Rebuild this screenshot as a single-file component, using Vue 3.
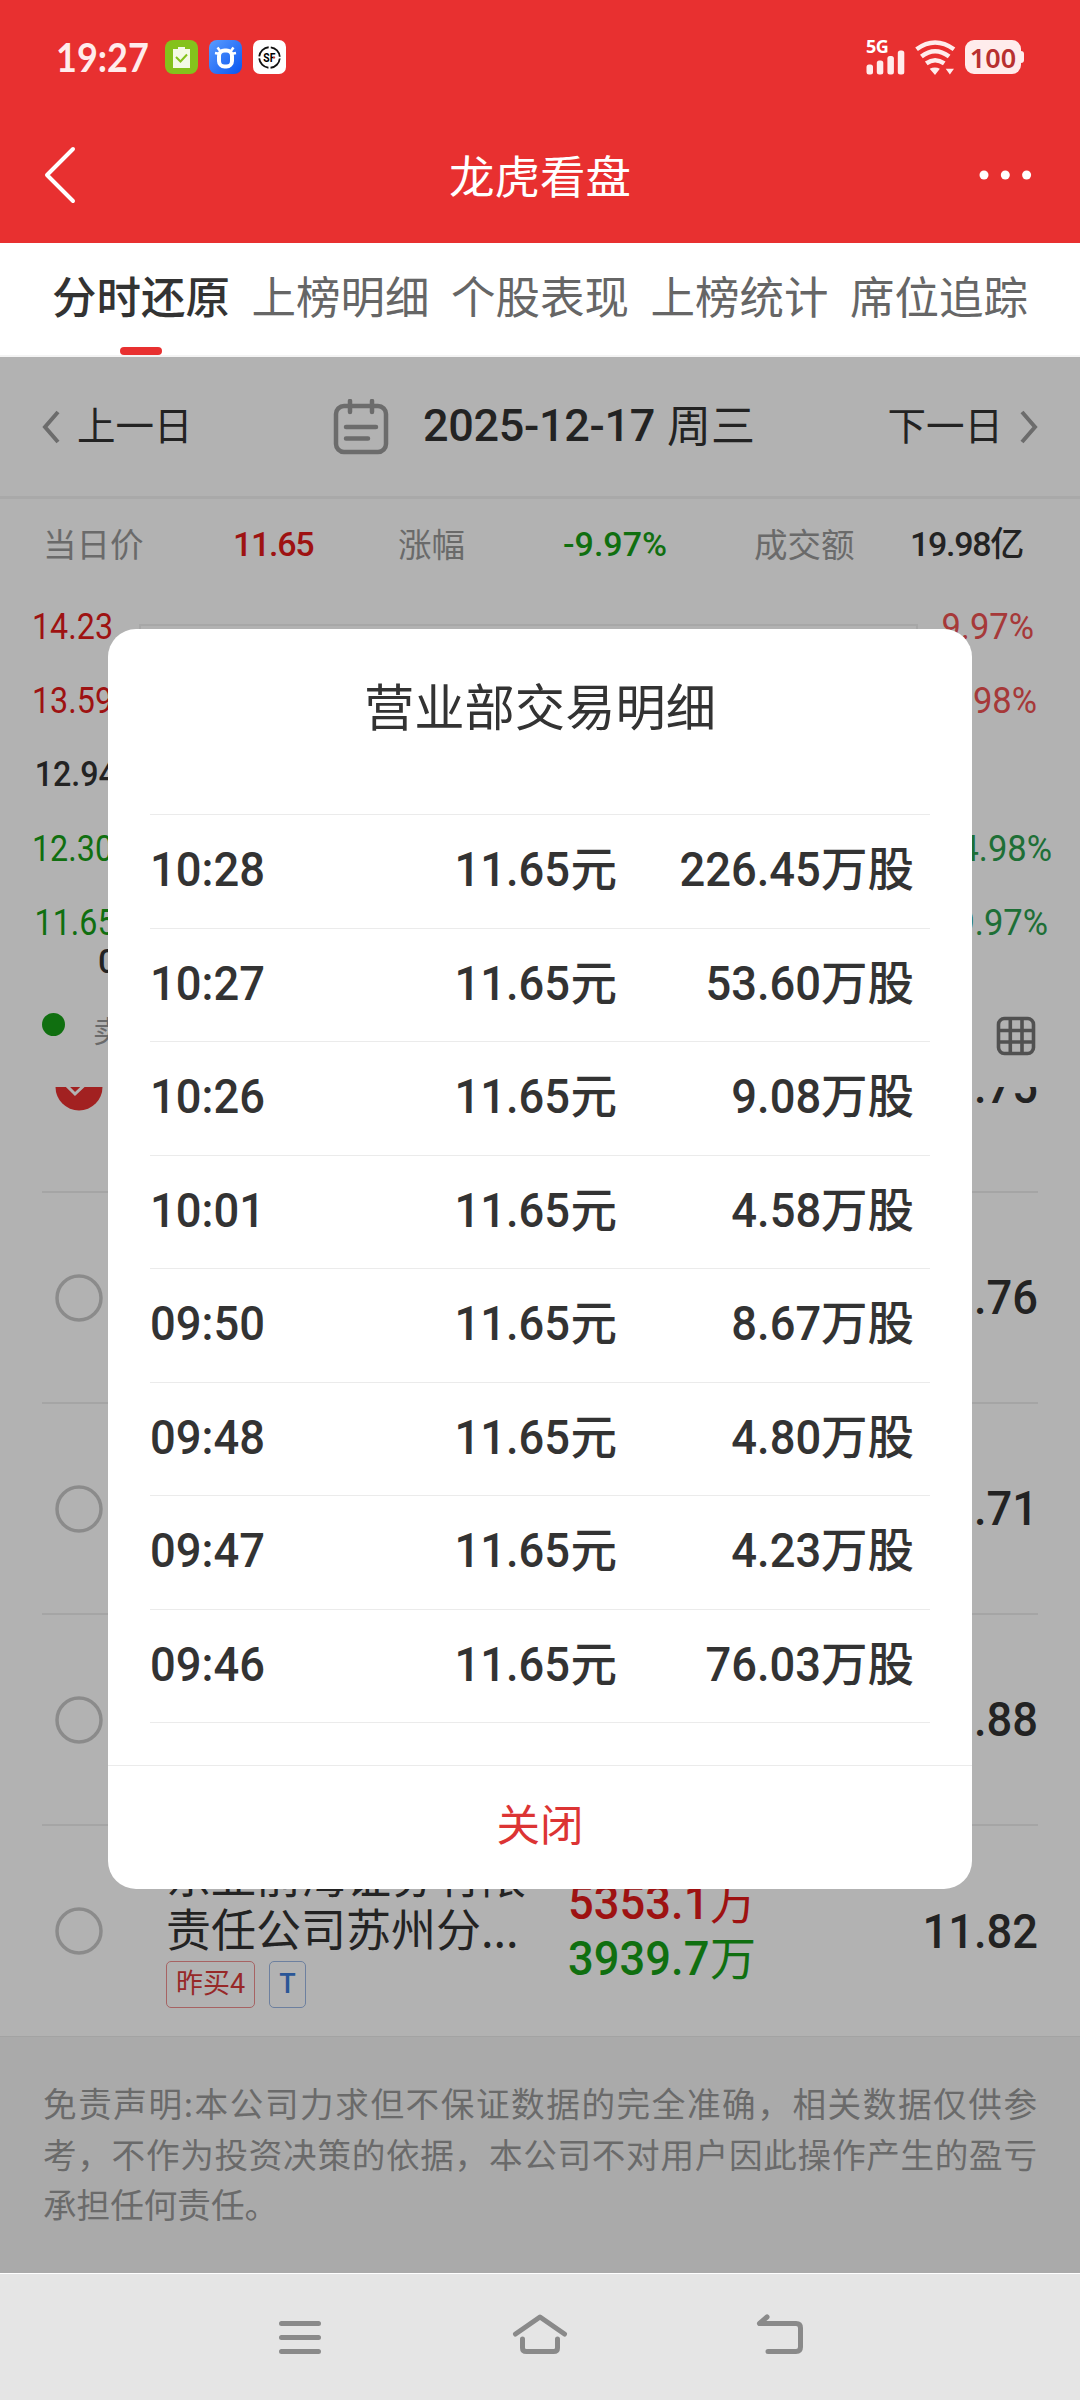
<template>
  <div class="phone">
    <header class="top">
      <div class="status-bar">
        <span class="clock">19:27</span>
        <svg class="app-icon" viewBox="0 0 33 34">
          <rect width="33" height="34" rx="8" fill="#84c21c" />
          <path d="M8 9h5V7h7v2h5v19H8z" fill="#f4fae6" />
          <path d="M11 17l4.500 4.500L22 14.500" fill="none" stroke="#84c21c" stroke-width="2" />
        </svg>
        <svg class="app-icon" viewBox="0 0 33 34">
          <defs>
            <linearGradient id="blue" x1="0" y1="0" x2="1" y2="1">
              <stop offset="0" stop-color="#5a9cff" />
              <stop offset="1" stop-color="#0a55f0" />
            </linearGradient>
          </defs>
          <rect width="33" height="34" rx="8" fill="url(#blue)" />
          <rect x="10" y="10.500" width="13" height="16" rx="5.500" fill="none" stroke="#fff" stroke-width="4" />
          <path d="M6 13l5 1M27 13l-5 1M8.500 7.500l3 4M24.500 7.500l-3 4" stroke="#fff" stroke-width="2.500" />
        </svg>
        <svg class="app-icon" viewBox="0 0 33 34">
          <rect width="33" height="34" rx="7" fill="#fff" />
          <circle cx="16.500" cy="17.500" r="10.300" fill="none" stroke="#111" stroke-width="1.800" stroke-dasharray="14 2.180" stroke-dashoffset="-1" />
          <text x="10.300" y="21.800" textLength="12" lengthAdjust="spacingAndGlyphs" class="sf">SF</text>
          <circle cx="21" cy="17.500" r="1" fill="#e03030" />
        </svg>
        <div class="signal">
          <span class="net">5G</span>
          <svg width="40" height="25" viewBox="0 0 40 25" fill="#ffecec">
            <rect x="0.500" y="14.500" width="6.500" height="10" rx="2.500" />
            <rect x="10.800" y="10.500" width="6.500" height="14" rx="2.500" />
            <rect x="21.400" y="6" width="6.500" height="18.500" rx="2.500" />
            <rect x="31.800" y="0.500" width="6.500" height="24" rx="2.500" />
          </svg>
        </div>
        <svg class="wifi" width="43" height="35" viewBox="0 0 43 36">
          <g fill="none" stroke="#ffecec" stroke-width="4.600">
            <path d="M2 9.500Q21 -4.500 40.500 9.500" />
            <path d="M7 17Q21 6 35.500 17" />
            <path d="M12 24Q21 17.500 30.500 24" />
          </g>
          <path d="M15.500 29.500Q21 27 26 29.500L21 36zM32 29.500h8.500L36.300 35.500z" fill="#ffecec" />
        </svg>
        <span class="battery">100</span>
      </div>
      <div class="title-bar">
        <svg width="32" height="60" viewBox="0 0 32 60">
          <path d="M29 4L3 30L29 56" fill="none" stroke="#fff" stroke-width="4" stroke-linecap="round" stroke-linejoin="round" />
        </svg>
        <h1>龙虎看盘</h1>
        <svg width="54" height="12" viewBox="0 0 54 12" fill="#fff">
          <circle cx="6" cy="6" r="4.500" />
          <circle cx="27.300" cy="6" r="4.500" />
          <circle cx="48.600" cy="6" r="4.500" />
        </svg>
      </div>
    </header>

    <nav class="tabs">
      <span v-for="(tab, i) in tabs" :key="tab" :class="['tab', { active: i === 0 }]">{{ tab }}</span>
    </nav>

    <main class="content">
      <div class="date-row">
        <div class="day prev">
          <svg width="18" height="34" viewBox="0 0 18 34"><path d="M16 2L3 17L16 32" /></svg>
          <span>上一日</span>
        </div>
        <div class="date">
          <svg width="56" height="56" viewBox="0 0 56 56" fill="none" stroke="#9b9b9b" stroke-width="4.500" stroke-linecap="round">
            <rect x="3" y="7" width="50" height="46" rx="8" />
            <path d="M17 2v11M39 2v11" />
            <path d="M13 28h30M13 39.500h22" />
          </svg>
          <span class="num">2025-12-17</span>
          <span class="week">周三</span>
        </div>
        <div class="day next">
          <span>下一日</span>
          <svg width="18" height="34" viewBox="0 0 18 34"><path d="M2 2L15 17L2 32" /></svg>
        </div>
      </div>

      <div class="stats">
        <span class="label">当日价</span>
        <span class="num red">11.65</span>
        <span class="label">涨幅</span>
        <span class="num green pct">-9.97%</span>
        <span class="label">成交额</span>
        <span class="num">19.98<i>亿</i></span>
      </div>

      <div class="chart">
        <div class="axis left">
          <span v-for="p in prices" :key="p.value" :class="p.color">{{ p.value }}</span>
        </div>
        <div class="plot"></div>
        <div class="axis right">
          <span v-for="p in percents" :key="p.value" :class="p.color">{{ p.value }}</span>
        </div>
      </div>
      <div class="time-axis">09:30</div>
      <div class="legend">
        <i class="dot"></i>
        <span>卖出</span>
        <svg width="40" height="40" viewBox="0 0 40 40" fill="none" stroke="#757575" stroke-width="3.600">
          <rect x="2.500" y="2.500" width="35" height="35" rx="6" />
          <path d="M14.300 3v34M26 3v34M3 14.500h34M3 26h34" />
        </svg>
      </div>

      <div class="list">
        <div v-for="row in rows" :key="row.price" class="seat">
          <svg v-if="row.checked" class="radio" viewBox="0 0 48 48">
            <circle cx="24" cy="24" r="23.500" fill="#e83030" />
            <path d="M11 22l9 9l18 -17" fill="none" stroke="#fff" stroke-width="3" />
          </svg>
          <svg v-else class="radio" viewBox="0 0 48 48">
            <circle cx="24" cy="24" r="22" fill="none" stroke="#c8c8c8" stroke-width="3.500" />
          </svg>
          <div class="seat-name">
            <template v-if="row.name">
              <p v-for="line in row.name" :key="line">{{ line }}</p>
              <div class="tags">
                <span class="tag tag-red">昨买4</span>
                <span class="tag tag-blue">T</span>
              </div>
            </template>
          </div>
          <div class="amounts">
            <template v-if="row.buy">
              <span class="num red"><b>{{ row.buy }}</b><i>万</i></span>
              <span class="num green"><b>{{ row.sell }}</b><i>万</i></span>
            </template>
          </div>
          <span class="num price">{{ row.price }}</span>
        </div>
      </div>

      <footer class="disclaimer">
        <p>免责声明:本公司力求但不保证数据的完全准确，相关数据仅供参</p>
        <p>考，不作为投资决策的依据，本公司不对用户因此操作产生的盈亏</p>
        <p>承担任何责任。</p>
      </footer>

      <div class="mask">
        <section class="dialog">
          <h2>营业部交易明细</h2>
          <ul>
            <li v-for="t in trades" :key="t.time">
              <span class="num t-time">{{ t.time }}</span>
              <span class="num t-price"><b>11.65</b><i>元</i></span>
              <span class="num t-volume"><b>{{ t.volume }}</b><i>万股</i></span>
            </li>
          </ul>
          <button class="close">关闭</button>
        </section>
      </div>
    </main>

    <div class="sys-nav">
      <svg width="56" height="48" viewBox="0 0 56 48">
        <path d="M9.500 12.500h37M9.500 26.500h37M9.500 40.500h37" />
      </svg>
      <svg width="56" height="48" viewBox="0 0 56 48">
        <path d="M3.500 23L28 6L52.500 23M10.500 28v9q0 3.500 4 3.500h27q4 0 4 -3.500v-9" />
      </svg>
      <svg width="56" height="48" viewBox="0 0 56 48">
        <path d="M15 6L7.500 12.500H44q4.500 0 4.500 4.500V36q0 4.500 -4.500 4.500H16" />
      </svg>
    </div>
  </div>
</template>

<script setup>
const tabs = ['分时还原', '上榜明细', '个股表现', '上榜统计', '席位追踪']

const prices = [
  { value: '14.23', color: 'red' },
  { value: '13.59', color: 'red' },
  { value: '12.94', color: 'mid' },
  { value: '12.30', color: 'green' },
  { value: '11.65', color: 'green low' },
]

const percents = [
  { value: '9.97%', color: 'up' },
  { value: '4.98%', color: 'up shift-1' },
  { value: '', color: '' },
  { value: '-4.98%', color: 'down shift-3' },
  { value: '-9.97%', color: 'down shift-2' },
]

const rows = [
  { price: '11.75', checked: true },
  { price: '11.76' },
  { price: '11.71' },
  { price: '11.88' },
  {
    price: '11.82',
    name: ['东亚前海证券有限', '责任公司苏州分...'],
    buy: '5353.1',
    sell: '3939.7',
  },
]

const trades = [
  { time: '10:28', volume: '226.45' },
  { time: '10:27', volume: '53.60' },
  { time: '10:26', volume: '9.08' },
  { time: '10:01', volume: '4.58' },
  { time: '09:50', volume: '8.67' },
  { time: '09:48', volume: '4.80' },
  { time: '09:47', volume: '4.23' },
  { time: '09:46', volume: '76.03' },
]
</script>

<style>
body {
  margin: 0;
}
</style>

<style scoped>
*,
*::before,
*::after {
  box-sizing: border-box;
}

h1,
h2,
p,
ul {
  margin: 0;
  padding: 0;
  font-weight: 400;
  list-style: none;
}

i {
  font-style: normal;
}

.phone {
  width: 1080px;
  height: 2400px;
  display: flex;
  flex-direction: column;
  overflow: hidden;
  background: #fff;
  color: #333;
  font-family: "Noto Sans CJK SC", sans-serif;
  line-height: 1;
}

.num {
  font-family: Roboto, "Noto Sans CJK SC", sans-serif;
  font-weight: 500;
  white-space: nowrap;
}

/* condensed digits */
.num b {
  display: inline-block;
  font-weight: 500;
  transform: scaleX(0.925);
  transform-origin: right;
}

.red { color: #e31a1a; }
.green { color: #179f17; }
.up { color: #ee5252; }
.down { color: #2ca04e; }

/* header */
.top {
  height: 243px;
  background: #e83030;
  color: #fff;
}

.status-bar {
  display: flex;
  align-items: center;
  height: 114px;
  padding: 0 56px;
}

.clock {
  flex: none;
  width: 109px;
  font-family: Lato, sans-serif;
  font-size: 40px;
  font-weight: 700;
  color: #ffecec;
  transform: scaleX(0.9);
  transform-origin: left;
}

.app-icon {
  width: 33px;
  height: 34px;
  margin-right: 11px;
}

.sf {
  font: 700 12.5px Roboto, sans-serif;
}

.signal {
  display: flex;
  flex-direction: column;
  width: 48px;
  height: 36px;
  margin-left: auto;
}

.net {
  height: 11px;
  font: 700 18px/15px "Open Sans", sans-serif;
  letter-spacing: -0.5px;
  color: #fff;
}

.battery {
  position: relative;
  width: 56px;
  height: 34px;
  margin: 0 3px 0 8px;
  border-radius: 9px;
  background: #ffecec;
  color: #b83030;
  font: 600 27px/35px "Noto Sans", sans-serif;
  text-align: center;
}

.battery::after {
  content: '';
  position: absolute;
  top: 11px;
  right: -3px;
  width: 4px;
  height: 12px;
  border-radius: 0 3px 3px 0;
  background: #ffecec;
}

.title-bar {
  display: flex;
  justify-content: space-between;
  align-items: center;
  height: 122px;
  padding: 0 48px 0 44px;
}

.title-bar h1 {
  padding-left: 26px;
  font-size: 45.5px;
}

/* tabs */
.tabs {
  display: flex;
  justify-content: space-between;
  height: 114px;
  padding: 0 52px;
  border-bottom: 2px solid #f4f4f4;
}

.tab {
  display: flex;
  flex-direction: column;
  align-items: center;
  padding-top: 30px;
  font-size: 44.500px;
  color: #666;
}

.active {
  color: #333;
  font-weight: 500;
}

.active::after {
  content: '';
  width: 42px;
  height: 8px;
  margin-top: 29px;
  border-radius: 4px;
  background: #e83030;
}

/* page behind the dialog */
.content {
  position: relative;
  height: 1916px;
}

.date-row {
  display: flex;
  justify-content: space-between;
  align-items: center;
  height: 142px;
  padding: 0 42px;
  border-bottom: 3px solid #f2f2f2;
}

.day {
  display: flex;
  align-items: center;
  gap: 17px;
  font-size: 38.5px;
}

.day span,
.week {
  padding-bottom: 7px;
}

.day svg {
  fill: none;
  stroke: #9b9b9b;
  stroke-width: 4;
}

.date {
  display: flex;
  align-items: center;
  margin-left: 8px;
  font-size: 44px;
}

.date .num {
  margin: 0 12px 0 34px;
  padding-bottom: 2px;
  font-size: 45px;
  letter-spacing: -0.3px;
}

.stats {
  display: grid;
  grid-template-columns: 190px 165px 165px 191px 156px 1fr;
  align-items: center;
  height: 90px;
  padding-left: 43px;
  font-size: 34px;
}

.stats .label {
  padding-bottom: 3px;
  color: #999;
  font-size: 33.5px;
}

.stats .num {
  font-size: 34px;
  letter-spacing: -1.3px;
}

.stats .pct {
  letter-spacing: 0;
}

.chart {
  display: flex;
  height: 370px;
}

.axis {
  display: flex;
  flex-direction: column;
  font: 400 37.5px Roboto, sans-serif;
}

.axis span {
  display: flex;
  align-items: center;
  height: 74px;
  transform: scaleX(0.86);
  transform-origin: left;
}

.left {
  width: 139px;
  padding-left: 32px;
}

.left .low {
  padding-left: 3px;
}

.left .mid {
  padding-left: 3px;
  font-size: 35px;
  font-weight: 500;
  transform: scaleX(0.92);
}

.right {
  width: 162px;
  padding-right: 46px;
}

.right span {
  justify-content: flex-end;
  transform: scaleX(0.92);
  transform-origin: right;
}

.right .shift-1 { margin-right: -3px; }
.right .shift-2 { margin-right: -14px; }
.right .shift-3 { margin-right: -18px; }

.plot {
  flex: 1;
  height: 333px;
  margin-top: 35px;
  border: 2px solid #f0f0f0;
}

.time-axis {
  height: 28px;
  margin-top: -13px;
  padding-left: 98px;
  font: 500 34px/31px Roboto, sans-serif;
}

.legend {
  display: flex;
  align-items: center;
  height: 113px;
  padding: 10px 44px 0 42px;
  color: #999;
  font-size: 30px;
}

.legend .dot {
  width: 23px;
  height: 23px;
  margin: -23px 28px 0 0;
  border-radius: 50%;
  background: #17a017;
}

.legend span {
  padding-bottom: 13px;
}

.legend svg {
  margin-left: auto;
}

/* seats list, scrolled under the legend */
.list {
  height: 949px;
  overflow: hidden;
}

.seat {
  display: flex;
  align-items: center;
  height: 211px;
  margin: 0 42px;
  border-bottom: 2px solid #ededed;
}

.seat:first-child {
  margin-top: -105px;
}

.seat:last-child {
  height: 210px;
  border-bottom: 0;
}

.radio {
  width: 48px;
  height: 48px;
  margin: 0 63px 0 13px;
}

.seat-name {
  width: 402px;
  padding-bottom: 6px;
  font-size: 45px;
  line-height: 53px;
}

.tags {
  display: flex;
  gap: 14px;
  margin-top: 7px;
}

.tag {
  height: 47px;
  padding: 0 9px;
  border: 1px solid;
  border-radius: 5px;
  font: 400 27px/44px Roboto, "Noto Sans CJK SC", sans-serif;
}

.tag-red {
  border-color: #ef8f8f;
  color: #d83a3a;
}

.tag-blue {
  border-color: #9cb8e4;
  color: #3d7bd8;
  font-weight: 500;
}

.amounts {
  display: flex;
  flex-direction: column;
  gap: 7px;
  padding-bottom: 2px;
}

.amounts .num,
.price {
  font-size: 49px;
}

.amounts b {
  margin-right: -11px;
  transform-origin: left;
}

.amounts i {
  font-size: 46px;
  font-weight: 400;
}

.price {
  margin-left: auto;
  transform: scaleX(0.925);
  transform-origin: right;
}

.disclaimer {
  height: 237px;
  padding: 41px 43px;
  border-top: 1px solid #eaeaea;
  background: #f4f4f4;
  color: #999;
  font-size: 33.6px;
  line-height: 50.5px;
}

.disclaimer p {
  white-space: nowrap;
  text-align-last: justify;
}

.disclaimer p:last-child {
  text-align-last: left;
}

/* dialog */
.mask {
  position: absolute;
  inset: 0;
  display: flex;
  justify-content: center;
  align-items: flex-start;
  padding-top: 272px;
  background: rgba(0, 0, 0, 0.3);
}

.dialog {
  display: flex;
  flex-direction: column;
  width: 864px;
  height: 1260px;
  border-radius: 28px;
  background: #fff;
}

.dialog h2 {
  height: 185px;
  padding-top: 50px;
  font-size: 50.3px;
  text-align: center;
}

.dialog ul {
  margin: 0 42px;
  border-top: 1px solid #ebebeb;
}

.dialog li {
  display: flex;
  align-items: center;
  height: 113.5px;
  padding: 0 16px 3px 0;
  border-bottom: 1px solid #ebebeb;
}

.dialog .num {
  width: 180px;
  font-size: 49px;
}

.dialog .num i {
  font-size: 46.5px;
}

.dialog .t-time {
  transform: scaleX(0.925);
  transform-origin: left;
}

.dialog .t-price {
  width: 287px;
  text-align: right;
}

.dialog .t-volume {
  flex: 1;
  text-align: right;
}

.close {
  height: 124px;
  margin-top: auto;
  padding: 0 0 9px;
  border: 0;
  border-top: 1px solid #ebebeb;
  background: none;
  color: #dc3434;
  font: 400 43.5px/1 "Noto Sans CJK SC", sans-serif;
}

/* system navigation */
.sys-nav {
  display: flex;
  justify-content: center;
  gap: 184px;
  flex: 1;
  padding-top: 37px;
  border-top: 1px solid #fff;
  background: #e5e5e5;
}

.sys-nav svg {
  fill: none;
  stroke: #8a8a8a;
  stroke-width: 5;
  stroke-linecap: round;
  stroke-linejoin: round;
}
</style>
